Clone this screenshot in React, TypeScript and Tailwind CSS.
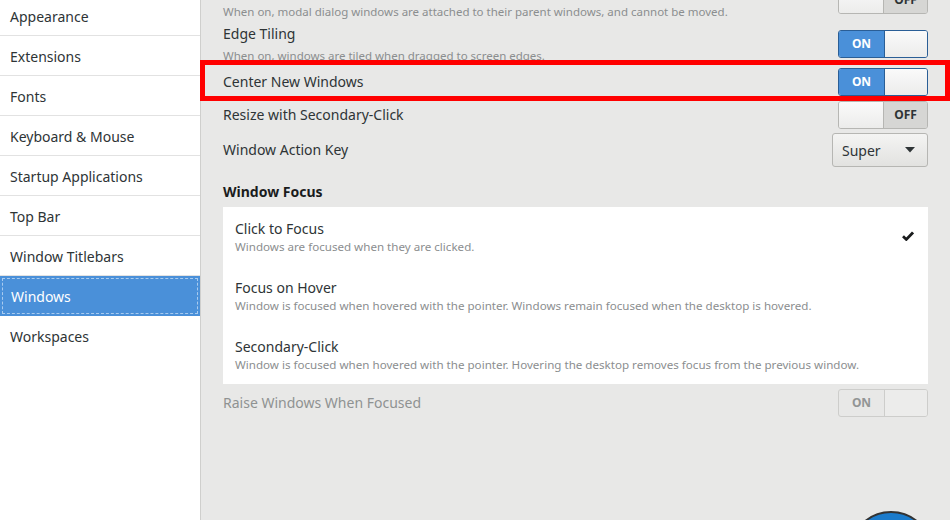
import React from "react";

const font = { fontFamily: '"Noto Sans", "DejaVu Sans", sans-serif' };

const sections = [
  "Appearance",
  "Extensions",
  "Fonts",
  "Keyboard & Mouse",
  "Startup Applications",
  "Top Bar",
  "Window Titlebars",
  "Windows",
  "Workspaces",
];

function Toggle({ on, disabled }: { on: boolean; disabled?: boolean }) {
  if (disabled) {
    return (
      <div className="flex w-[90px] h-[28px] rounded-[3px] border border-[#cdcdcb] bg-[#e8e8e7] overflow-hidden shrink-0">
        <div className="w-[45px] flex items-center justify-center text-[12px] font-bold text-[#929595]">ON</div>
        <div className="flex-1 border-l border-[#cdcdcb] bg-[#ececeb]" />
      </div>
    );
  }
  if (on) {
    return (
      <div className="flex w-[90px] h-[28px] rounded-[3px] border border-[#2a5e96] overflow-hidden shrink-0">
        <div className="w-[45px] bg-[#4a90d9] flex items-center justify-center text-[12px] font-bold text-white">ON</div>
        <div className="flex-1 border-l border-[#2a5e96] bg-gradient-to-b from-[#fafafa] to-[#ececeb]" />
      </div>
    );
  }
  return (
    <div className="flex w-[90px] h-[28px] rounded-[3px] border border-[#b6b6b3] overflow-hidden shrink-0">
      <div className="w-[45px] border-r border-[#b6b6b3] bg-gradient-to-b from-[#fafafa] to-[#ececeb]" />
      <div className="flex-1 bg-[#d6d6d4] flex items-center justify-center text-[12px] font-bold text-[#2e3436]">OFF</div>
    </div>
  );
}

function SwitchRow({ label, desc, on, h }: { label: string; desc?: string; on: boolean; h: string }) {
  return (
    <div className={`flex items-center justify-between ${h}`}>
      <div className="flex flex-col">
        <span className="text-[14px] leading-[20px] text-[#2e3436]">{label}</span>
        {desc && <span className="mt-1 text-[11.5px] leading-[16px] text-[#8b8e8f]">{desc}</span>}
      </div>
      <Toggle on={on} />
    </div>
  );
}

const focusModes = [
  { title: "Click to Focus", desc: "Windows are focused when they are clicked.", checked: true },
  {
    title: "Focus on Hover",
    desc: "Window is focused when hovered with the pointer. Windows remain focused when the desktop is hovered.",
  },
  {
    title: "Secondary-Click",
    desc: "Window is focused when hovered with the pointer. Hovering the desktop removes focus from the previous window.",
  },
];

export default function App() {
  return (
    <div style={font} className="relative flex w-[950px] h-[520px] overflow-hidden bg-[#e8e8e7]">
      {/* Sidebar */}
      <div className="w-[201px] shrink-0 bg-white border-r border-[#cfcfcd] flex flex-col">
        <div className="-mt-[4px]">
          {sections.map((s, i) =>
            s === "Windows" ? (
              <div key={s} className="h-[40px] bg-[#4a90d9] p-[2px]">
                <div className="h-full border border-dashed border-[#a9cbef] flex items-center pl-[8px] text-[14px] text-white">
                  {s}
                </div>
              </div>
            ) : (
              <div
                key={s}
                className={`h-[40px] flex items-center pl-[10px] pt-[1px] text-[14px] text-[#2e3436] ${
                  i === sections.length - 1 ? "" : "border-b border-[#e2e2e2]"
                }`}
              >
                {s}
              </div>
            )
          )}
        </div>
      </div>

      {/* Main panel */}
      <div className="flex-1 px-[22px]">
        <div className="-mt-[22px] flex flex-col">
          <SwitchRow
            h="h-[44px]"
            label="Attach Modal Dialogs"
            desc="When on, modal dialog windows are attached to their parent windows, and cannot be moved."
            on={false}
          />
          <SwitchRow h="h-[44px]" label="Edge Tiling" desc="When on, windows are tiled when dragged to screen edges." on />
          <SwitchRow h="h-[32px]" label="Center New Windows" on />
          <SwitchRow h="h-[34px]" label="Resize with Secondary-Click" on={false} />
          <div className="flex items-center justify-between h-[36px]">
            <span className="text-[14px] leading-[20px] text-[#2e3436]">Window Action Key</span>
            <div className="w-[96px] h-[34px] rounded-[3px] border border-[#b6b6b3] bg-gradient-to-b from-[#f4f4f3] to-[#e2e2e0] flex items-center justify-between pl-[9px] pr-[12px]">
              <span className="text-[14px] text-[#2e3436]">Super</span>
              <svg width="10" height="6" viewBox="0 0 10 6">
                <path d="M0 0 L10 0 L5 5.5 Z" fill="#2e3436" />
              </svg>
            </div>
          </div>

          <div className="mt-[14px] text-[14px] leading-[20px] font-bold text-[#1a1c1d]">Window Focus</div>

          <div className="mt-[5px] bg-white">
            {focusModes.map((m) => (
              <div key={m.title} className="h-[59px] flex items-start justify-between px-[12px] pt-[12px]">
                <div className="flex flex-col">
                  <span className="text-[14px] leading-[20px] text-[#2e3436]">{m.title}</span>
                  <span className="text-[11.6px] leading-[15px] text-[#8b8e8f]">{m.desc}</span>
                </div>
                {m.checked && (
                  <svg width="12" height="10" viewBox="0 0 12 10" className="mt-[12px] mr-[2px]">
                    <path d="M1 5.3 L4.3 8.4 L11 1.4" stroke="#1a1c1d" strokeWidth="2.8" fill="none" />
                  </svg>
                )}
              </div>
            ))}
          </div>

          <div className="flex items-center justify-between pt-[5px]">
            <span className="text-[14px] leading-[20px] text-[#8f9292]">Raise Windows When Focused</span>
            <Toggle on disabled />
          </div>
        </div>
      </div>

      {/* highlight annotation */}
      <div className="absolute left-[200px] top-[60px] w-[750px] h-[41px] border-[5px] border-[#ff0000] pointer-events-none" />

      {/* floating round button, partly off screen */}
      <div className="absolute left-[849px] top-[511px] w-[84px] h-[84px] rounded-full bg-[#1b7bcb] border-2 border-[#333333]" />
    </div>
  );
}
